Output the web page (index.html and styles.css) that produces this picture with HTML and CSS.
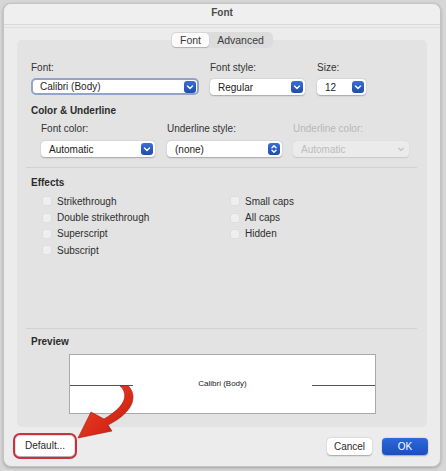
FILE: index.html
```html
<!DOCTYPE html>
<html>
<head>
<meta charset="utf-8">
<link rel="stylesheet" href="styles.css">
</head>
<body>
<div class="window">
  <div class="titlebar">Font</div>
  <div class="titleline"></div>
  <div class="tabs">
    <div class="tab active">Font</div>
    <div class="tab">Advanced</div>
  </div>
  <div class="panel">
    <div class="row1">
      <div class="col c1">
        <div class="label">Font:</div>
        <div class="select focused"><span>Calibri (Body)</span><span class="stepper"><svg viewBox="0 0 12 12"><path d="M3.5 5 L6 7.5 L8.5 5" /></svg></span></div>
      </div>
      <div class="col c2">
        <div class="label">Font style:</div>
        <div class="select"><span>Regular</span><span class="stepper"><svg viewBox="0 0 12 12"><path d="M3.5 5 L6 7.5 L8.5 5" /></svg></span></div>
      </div>
      <div class="col c3">
        <div class="label">Size:</div>
        <div class="select"><span>12</span><span class="stepper"><svg viewBox="0 0 12 12"><path d="M3.5 5 L6 7.5 L8.5 5" /></svg></span></div>
      </div>
    </div>

    <div class="heading h-color">Color &amp; Underline</div>
    <div class="row2">
      <div class="col d1">
        <div class="label">Font color:</div>
        <div class="select"><span>Automatic</span><span class="stepper"><svg viewBox="0 0 12 12"><path d="M3.5 5 L6 7.5 L8.5 5" /></svg></span></div>
      </div>
      <div class="col d2">
        <div class="label">Underline style:</div>
        <div class="select"><span>(none)</span><span class="stepper"><svg viewBox="0 0 12 12"><path d="M4 4.8 L6 2.8 L8 4.8 M4 7.2 L6 9.2 L8 7.2" /></svg></span></div>
      </div>
      <div class="col d3">
        <div class="label disabled">Underline color:</div>
        <div class="select off"><span>Automatic</span><span class="chev"><svg viewBox="0 0 12 12"><path d="M3.5 5 L6 7.5 L8.5 5" /></svg></span></div>
      </div>
    </div>

    <div class="sep sep1"></div>

    <div class="heading h-effects">Effects</div>
    <div class="effects">
      <div class="check"><span class="box"></span>Strikethrough</div>
      <div class="check"><span class="box"></span>Small caps</div>
      <div class="check"><span class="box"></span>Double strikethrough</div>
      <div class="check"><span class="box"></span>All caps</div>
      <div class="check"><span class="box"></span>Superscript</div>
      <div class="check"><span class="box"></span>Hidden</div>
      <div class="check"><span class="box"></span>Subscript</div>
    </div>

    <div class="sep sep2"></div>

    <div class="heading h-preview">Preview</div>
    <div class="preview">
      <span class="pline left"></span>
      <span class="ptext">Calibri (Body)</span>
      <span class="pline right"></span>
    </div>
  </div>

  <div class="footer">
    <div class="btn default">Default...</div>
    <div class="spacer"></div>
    <div class="btn cancel">Cancel</div>
    <div class="btn ok">OK</div>
  </div>
</div>

<svg class="annot" viewBox="60 378 90 70" width="90" height="70">
  <defs>
    <linearGradient id="rg" x1="0" y1="0" x2="1" y2="1">
      <stop offset="0" stop-color="#f04a2c"/>
      <stop offset="0.6" stop-color="#d92a18"/>
      <stop offset="1" stop-color="#a81a10"/>
    </linearGradient>
  </defs>
  <path d="M120 386 C128 393 128 405 104 419 L91 412 L78 438 L112 431 L108 425 C134 412 138 396 128 385.5 Z" fill="url(#rg)" stroke="#9c1a0f" stroke-width="0.6"/>
</svg>
</body>
</html>
```

FILE: styles.css
```css
* { box-sizing: border-box; }
html, body { margin: 0; padding: 0; }
body {
  width: 446px;
  height: 471px;
  background: #d6d6d6;
  font-family: "Liberation Sans", Arial, sans-serif;
  font-size: 10px;
  color: #333;
  overflow: hidden;
  padding: 3px 5px 0 3px;
}
.window {
  width: 438px;
  height: 464px;
  background: #ececec;
  border: 1px solid #c4c4c4;
  border-radius: 8px;
  box-shadow: 0 1px 3px rgba(0,0,0,0.25);
  display: flex;
  flex-direction: column;
}
.titlebar {
  height: 21px;
  line-height: 18px;
  text-align: center;
  font-weight: bold;
  font-size: 10px;
  color: #4a4a4a;
  border-bottom: 1px solid #d9d9d9;
  background: #efefef;
  border-radius: 8px 8px 0 0;
}
.titleline {
  height: 3px;
  border-bottom: 1px solid #dedede;
}
.tabs {
  position: relative;
  z-index: 1;
  align-self: center;
  display: flex;
  margin: 4px 0 -8px 0;
  height: 16px;
  background: #dcdcdc;
  border-radius: 5px;
  padding: 1px;
}
.tab {
  height: 14px;
  line-height: 14px;
  font-size: 10.5px;
  color: #3a3a3a;
  padding: 0 6px;
  border-radius: 4px;
}
.tab.active {
  background: #fbfbfb;
  width: 37px;
  text-align: center;
  box-shadow: 0 0.5px 1px rgba(0,0,0,0.2);
}
.tab:not(.active) { width: 63px; text-align: center; }

.panel {
  margin: 0 13px 0 13px;
  height: 387px;
  background: #e3e3e3;
  border-radius: 5px;
  padding-top: 22px;
  display: flex;
  flex-direction: column;
}
.label { height: 12px; line-height: 12px; color: #333; }
.label.disabled { color: #b8b8b8; }
.row1 { display: flex; padding-left: 14px; }
.row1 .select { margin-top: 5px; }
.c1 { width: 168px; }
.c2 { width: 95px; margin-left: 11px; }
.c3 { width: 49px; margin-left: 12px; }
.select {
  height: 16px;
  background: #ffffff;
  border-radius: 4px;
  box-shadow: 0 0.5px 1.5px rgba(0,0,0,0.28);
  display: flex;
  align-items: center;
  justify-content: space-between;
  padding: 0 2px 0 8px;
  color: #222;
}
.select.focused {
  height: 17px;
  margin-top: 4px !important;
  border: 2px solid #92a5c8;
  border-radius: 5px;
  padding-left: 7px;
  padding-right: 1px;
  box-shadow: none;
  color: #1f1f1f;
}
.stepper {
  width: 12px;
  height: 12px;
  border-radius: 3px;
  background: linear-gradient(#3b6fd6, #1d4cb2);
  display: flex;
}
.stepper svg, .chev svg { width: 12px; height: 12px; }
.stepper path { stroke: #fff; stroke-width: 1.4; fill: none; stroke-linecap: round; stroke-linejoin: round; }
.chev path { stroke: #c2c2c2; stroke-width: 1.2; fill: none; }
.select.off {
  background: #ebebeb;
  color: #bdbdbd;
  box-shadow: 0 0.5px 1px rgba(0,0,0,0.12);
}
.chev { width: 12px; height: 12px; display: flex; }

.heading { font-weight: bold; height: 12px; line-height: 12px; color: #2b2b2b; padding-left: 14px; }
.h-color { margin-top: 10px; }
.row2 { display: flex; padding-left: 24px; margin-top: 6px; }
.row2 .select { margin-top: 6px; }
.d1 { width: 114px; }
.d2 { width: 115px; margin-left: 12px; }
.d3 { width: 116px; margin-left: 11px; }

.sep { height: 1px; background: #d2d2d2; margin-left: 9px; margin-right: 10px; }
.sep1 { margin-top: 10px; }
.h-effects { margin-top: 9px; }
.effects {
  display: grid;
  grid-template-columns: 188px 1fr;
  grid-auto-rows: 16.4px;
  margin-top: 4px;
  padding-left: 24px;
}
.check { display: flex; align-items: center; color: #2e2e2e; }
.box {
  width: 10px;
  height: 10px;
  margin: 0 5px 0 1px;
  border-radius: 3px;
  background: #efefef;
  border: 1px solid #dedede;
}
.sep2 { margin-top: 69px; }
.h-preview { margin-top: 7px; }
.preview {
  margin: 6px 0 0 52px;
  width: 307px;
  height: 60px;
  background: #fff;
  border: 1px solid #a9a9a9;
  display: flex;
  align-items: center;
  justify-content: space-between;
}
.pline { width: 63px; height: 1px; background: #555; margin-top: 3px; }
.ptext { font-size: 8px; color: #222; }

.footer {
  display: flex;
  align-items: center;
  padding: 0 12px 0 12px;
  margin-top: 9px;
}
.spacer { flex: 1; }
.btn {
  height: 17px;
  line-height: 17px;
  border-radius: 4px;
  text-align: center;
  font-size: 10px;
  color: #2a2a2a;
  background: #fff;
  box-shadow: 0 0.5px 1.5px rgba(0,0,0,0.3);
}
.default {
  width: 58px;
  height: 20px;
  line-height: 20px;
  outline: 2px solid #c8323c;
  outline-offset: 1px;
}
.cancel { width: 45px; }
.ok {
  width: 46px;
  margin-left: 10px;
  background: linear-gradient(#2f68d8, #1a4fbf);
  color: #fff;
}
.annot { position: absolute; left: 60px; top: 378px; }
```
